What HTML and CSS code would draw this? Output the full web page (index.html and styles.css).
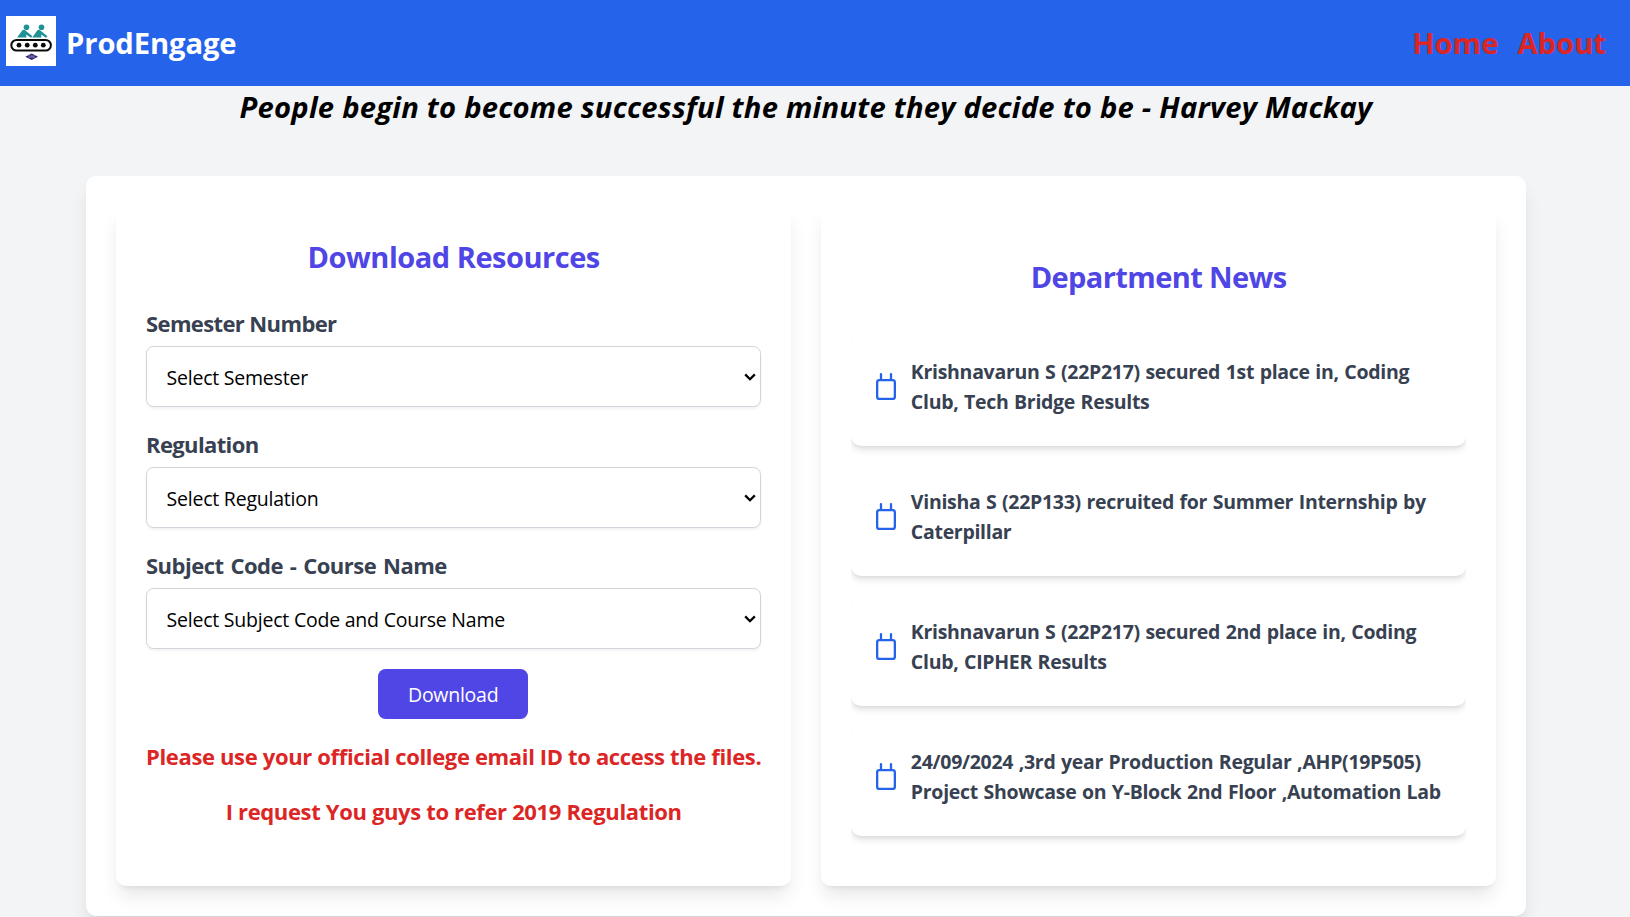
FILE: index.html
```html
<!DOCTYPE html>
<html lang="en">
<head>
<meta charset="utf-8">
<title>ProdEngage</title>
<link rel="stylesheet" href="styles.css">
</head>
<body>
<svg class="defs" width="0" height="0">
  <symbol id="calendar" viewBox="0 0 20 27"><g fill="none" stroke="#2563eb" stroke-width="2.3" stroke-linecap="round"><rect x="1.150" y="7.150" width="17.700" height="18.700" rx="2.2"/><path d="M5 1.200v5M15 1.200v5"/></g></symbol>
  <symbol id="chevron" viewBox="0 0 12 8"><path d="M1.2 1.4 6 6.2l4.800-4.800" fill="none" stroke="#000" stroke-width="2.300"/></symbol>
</svg>
<header class="topbar">
  <a class="brand">
    <svg class="logo" viewBox="0 0 50 50">
      <rect width="50" height="50" fill="#fff"/>
      <g fill="#1f9296">
        <circle cx="20.500" cy="11.300" r="2.800"/><path d="M11 21.500 16.200 14.500Q18 13 20 15L26.500 20.200 25 21.700 20 18.500 20.500 21.500Z"/>
        <circle cx="35.500" cy="11.300" r="2.800"/><path d="M26.300 21.500 31.200 14.500Q33 13 35 15L41.500 20.200 40 21.700 35 18.500 35.500 21.500Z"/>
      </g>
      <rect x="5.300" y="24" width="39.600" height="10.600" rx="5.300" fill="#fff" stroke="#0b0b0b" stroke-width="2"/>
      <g fill="#0b0b0b"><circle cx="13" cy="29.200" r="2.400"/><circle cx="21.200" cy="29.200" r="2.400"/><circle cx="29.300" cy="29.200" r="2.400"/><circle cx="37.300" cy="29.200" r="2.400"/></g>
      <path d="M19.300 40.700 25.700 37.500 32 40.700 25.700 43.900Z" fill="#2b2572"/>
      <path d="M22.500 39.800h1.500v1.500h-1.500M25.200 42v-2.300h1.200V42M29 39.800h-1.300v1.900H29" fill="none" stroke="#b9b6dc" stroke-width=".5"/>
    </svg>
    <span class="brand-name">ProdEngage</span>
  </a>
  <nav class="nav"><a>Home</a><a>About</a></nav>
</header>
<main class="page">
  <p class="quote">People begin to become successful the minute they decide to be - Harvey Mackay</p>
  <div class="board">
    <section class="panel">
      <h2 class="panel-title">Download Resources</h2>
      <form class="form">
        <div class="field">
          <label class="label">Semester Number</label>
          <div class="select-box"><select class="select"><option>Select Semester</option></select><svg class="chevron"><use href="#chevron"/></svg></div>
        </div>
        <div class="field">
          <label class="label">Regulation</label>
          <div class="select-box"><select class="select"><option>Select Regulation</option></select><svg class="chevron"><use href="#chevron"/></svg></div>
        </div>
        <div class="field">
          <label class="label label-course">Subject Code - Course Name</label>
          <div class="select-box"><select class="select"><option>Select Subject Code and Course Name</option></select><svg class="chevron"><use href="#chevron"/></svg></div>
        </div>
        <button class="button" type="button">Download</button>
        <p class="notice">Please use your official college email ID to access the files.</p>
        <p class="notice">I request You guys to refer 2019 Regulation</p>
      </form>
    </section>
    <section class="panel panel-news">
      <h2 class="panel-title news-title">Department News</h2>
      <ul class="news">
        <li class="news-item"><svg class="calendar"><use href="#calendar"/></svg><p>Krishnavarun S (22P217) secured 1st place in, Coding<br>Club, Tech Bridge Results</p></li>
        <li class="news-item"><svg class="calendar"><use href="#calendar"/></svg><p>Vinisha S (22P133) recruited for Summer Internship by<br>Caterpillar</p></li>
        <li class="news-item"><svg class="calendar"><use href="#calendar"/></svg><p>Krishnavarun S (22P217) secured 2nd place in, Coding<br>Club, CIPHER Results</p></li>
        <li class="news-item"><svg class="calendar"><use href="#calendar"/></svg><p>24/09/2024 ,3rd year Production Regular ,AHP(19P505)<br>Project Showcase on Y-Block 2nd Floor ,Automation Lab</p></li>
      </ul>
    </section>
  </div>
</main>
</body>
</html>
```
FILE: styles.css
```css
* { box-sizing: border-box; margin: 0; padding: 0; }
html { height: 100%; overflow: hidden; }
body { height: 917px; overflow: hidden; background: #f3f4f6; font-family: "Open Sans", "Noto Sans", sans-serif; color: #000; }
.defs { display: block; height: 0; }
.topbar { display: flex; justify-content: space-between; align-items: flex-start; height: 86px; padding: 16px 24px 20px 6px; background: #2563eb; }
.brand { display: flex; align-items: center; gap: 10px; height: 50px; }
.logo { width: 50px; height: 50px; }
.brand-name { padding-top: 3px; font-size: 29.2px; font-weight: 700; line-height: 40px; letter-spacing: -.1px; color: #fff; }
.nav { display: flex; gap: 19px; height: 50px; align-items: center; padding-top: 3px; font-size: 29.2px; font-weight: 700; line-height: 40px; color: #dc2626; }
.page { width: 1612px; }
.quote { height: 40px; padding-top: 1px; font-size: 29.2px; font-style: italic; font-weight: 700; line-height: 40px; letter-spacing: .23px; text-align: center; white-space: nowrap; }
.board { display: grid; grid-template-columns: 1fr 1fr; gap: 30px; width: 1440px; height: 740px; margin: 50px auto 0; padding: 30px; border-radius: 10px; background: #fff; box-shadow: 0 12.5px 18.75px -3.75px rgba(0,0,0,.1), 0 5px 7.5px -5px rgba(0,0,0,.1); }
.panel { padding: 30px; border-radius: 10px; background: #fff; box-shadow: 0 12.5px 18.75px -3.75px rgba(0,0,0,.1), 0 5px 7.5px -5px rgba(0,0,0,.1); }
.panel-news { padding-top: 50px; }
.panel-title { height: 40px; padding-top: 1px; font-size: 29px; font-weight: 700; line-height: 40px; letter-spacing: -.48px; text-align: center; color: #4f46e5; }
.news-title { letter-spacing: -.6px; }
.form { display: flex; flex-direction: column; gap: 20px; padding-top: 29px; }
.label { display: block; height: 35px; margin-bottom: 6px; font-size: 22px; font-weight: 700; line-height: 36px; letter-spacing: -.62px; color: #374151; }
.label-course { letter-spacing: -.5px; word-spacing: 1.6px; }
.field { height: 101px; }
.select-box { display: grid; align-items: center; height: 61px; }
.select { grid-area: 1 / 1; width: 100%; height: 61px; padding: 2px 20px 0 19.5px; appearance: none; border: 1px solid #d1d5db; border-radius: 7.5px; background: #fff; box-shadow: 0 1.25px 2.5px rgba(0,0,0,.05); font-family: inherit; font-size: 19.5px; letter-spacing: -.22px; color: #000; }
.chevron { grid-area: 1 / 1; justify-self: end; width: 12px; height: 8px; margin-right: 5px; pointer-events: none; }
.button { align-self: center; width: 150px; height: 50px; margin: 1px 1px -1px 0; padding-top: 1px; border: 0; border-radius: 7.5px; background: #4f46e5; font-family: inherit; font-size: 19.5px; letter-spacing: -.25px; color: #fff; }
.notice { height: 35px; font-size: 22px; font-weight: 700; line-height: 36px; letter-spacing: -.35px; text-align: center; white-space: nowrap; color: #dc2626; }
.news { display: grid; gap: 20px; margin-top: 40px; padding-bottom: 20px; overflow: hidden; list-style: none; }
.news-item { display: flex; align-items: flex-start; gap: 14.5px; height: 110px; padding: 21px 25px; border-radius: 10px; background: #fff; font-size: 19.5px; font-weight: 700; line-height: 30px; letter-spacing: -.3px; word-spacing: .8px; white-space: nowrap; color: #374151; box-shadow: 0 5px 7.5px -1.25px rgba(0,0,0,.1), 0 2.5px 5px -2.5px rgba(0,0,0,.1); }
.calendar { flex: none; width: 20px; height: 27px; margin-top: 16px; }
```
